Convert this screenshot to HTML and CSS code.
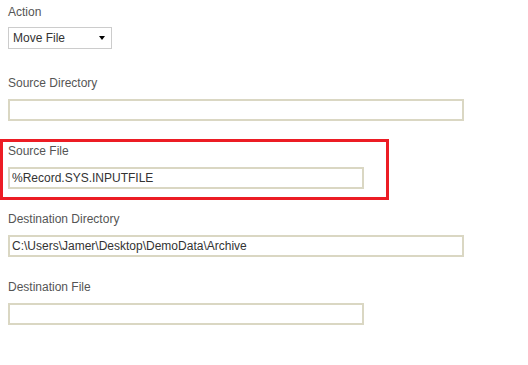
FILE: index.html
```html
<!DOCTYPE html>
<html lang="en">
<head>
  <meta charset="UTF-8" />
  <title>Move File Action</title>
  <link rel="stylesheet" href="styles.css">
</head>
<body>
  <form class="acao">
    <div class="campo campo-acao">
      <label for="acao">Action</label>
      <span class="select-wrap">
        <select id="acao">
          <option>Move File</option>
          <option>Copy File</option>
          <option>Delete File</option>
        </select>
      </span>
    </div>

    <div class="campo">
      <label for="src-dir">Source Directory</label>
      <input type="text" id="src-dir" class="largo" value="" />
    </div>

    <div class="campo destaque">
      <label for="src-file">Source File</label>
      <input type="text" id="src-file" class="curto" value="%Record.SYS.INPUTFILE" />
    </div>

    <div class="campo">
      <label for="dst-dir">Destination Directory</label>
      <input type="text" id="dst-dir" class="largo" value="C:\Users\Jamer\Desktop\DemoData\Archive" />
    </div>

    <div class="campo">
      <label for="dst-file">Destination File</label>
      <input type="text" id="dst-file" class="curto" value="" />
    </div>
  </form>
</body>
</html>
```

FILE: styles.css
```css
body {
  font-family: 'Liberation Sans', Arial, sans-serif;
  font-size: 12px;
  background: #fff;
  color: #555;
  margin: 0;
  padding: 5px 8px;
}

.campo {
  margin-top: 23px;
}

.campo label {
  display: block;
  line-height: 14px;
  margin-bottom: 9px;
  color: #555;
}

.campo-acao {
  margin-top: 0;
}

.campo-acao label {
  margin-bottom: 8px;
}

.campo-acao + .campo {
  margin-top: 27px;
}

.select-wrap {
  position: relative;
  display: inline-block;
  vertical-align: top;
}

.select-wrap::after {
  content: "";
  position: absolute;
  left: 91px;
  top: 9px;
  border-top: 4px solid #000;
  border-left: 3.5px solid transparent;
  border-right: 3.5px solid transparent;
  pointer-events: none;
}

select {
  appearance: none;
  -webkit-appearance: none;
  display: block;
  box-sizing: border-box;
  width: 104px;
  height: 22px;
  margin: 0;
  padding: 0 0 0 4px;
  border: 1px solid #ccc;
  border-radius: 0;
  background: #fff;
  font-family: inherit;
  font-size: 12px;
  color: #333;
  outline: none;
}

input[type="text"] {
  display: block;
  box-sizing: border-box;
  height: 22px;
  margin: 0;
  padding: 0 2px;
  border: 2px solid #dad7c3;
  background: #fff;
  font-family: inherit;
  font-size: 12px;
  color: #333;
  outline: none;
}

.largo {
  width: 456px;
}

.curto {
  width: 356px;
}

/* caixa vermelha em volta do campo */
.destaque {
  box-sizing: border-box;
  width: 389px;
  margin: 18px 0 0 -8px;
  padding: 2px 0 8px 5px;
  border: 3px solid #ec1c24;
}

.destaque + .campo {
  margin-top: 12px;
}
```
